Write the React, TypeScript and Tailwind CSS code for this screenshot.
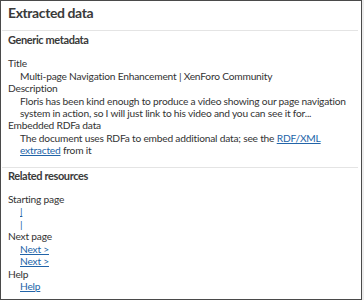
export default function App() {
  const link = "text-[#2264a8] underline underline-offset-[1px]";
  return (
    <div className="w-[364px] h-[300px] bg-[#ededed]">
      <div className="w-[362px] h-[300px] border border-[#4a4a4a] bg-white text-[#333] font-['Lato',sans-serif] text-[10.2px] tracking-[-0.2px] leading-[12.4px] overflow-hidden">
        <h2 className="px-[7px] pt-[3px] h-[29px] text-[14px] tracking-[-0.4px] leading-[17px] font-bold text-[#3a3a3a]">Extracted data</h2>
        <div className="ml-[1px] mr-[3px] h-px bg-[#e4e4e4]" />
        <section className="px-[7px]">
          <h3 className="pt-[3px] text-[11px] tracking-[-0.4px] font-bold text-[#3a3a3a]">Generic metadata</h3>
          <dl className="mt-[11px]">
            <dt>Title</dt>
            <dd className="pl-[12px]">Multi-page Navigation Enhancement | XenForo Community</dd>
            <dt>Description</dt>
            <dd className="pl-[12px]">
              Floris has been kind enough to produce a video showing our page navigation system in action, so I will just link to his video and you can see it for...
            </dd>
            <dt>Embedded RDFa data</dt>
            <dd className="pl-[12px]">
              The document uses RDFa to embed additional data; see the <a className={link}>RDF/XML extracted</a> from it
            </dd>
          </dl>
        </section>
        <div className="mt-[10px] ml-[1px] mr-[3px] h-px bg-[#e4e4e4]" />
        <section className="px-[7px]">
          <h3 className="pt-[2px] text-[11px] tracking-[-0.4px] font-bold text-[#3a3a3a]">Related resources</h3>
          <dl className="mt-[11px]">
            <dt>Starting page</dt>
            <dd className="pl-[12px]"><a className={link}>|</a></dd>
            <dd className="pl-[12px]"><a className={link}>|</a></dd>
            <dt>Next page</dt>
            <dd className="pl-[12px]"><a className={link}>Next &gt;</a></dd>
            <dd className="pl-[12px]"><a className={link}>Next &gt;</a></dd>
            <dt>Help</dt>
            <dd className="pl-[12px]"><a className={link}>Help</a></dd>
          </dl>
        </section>
      </div>
    </div>
  );
}
